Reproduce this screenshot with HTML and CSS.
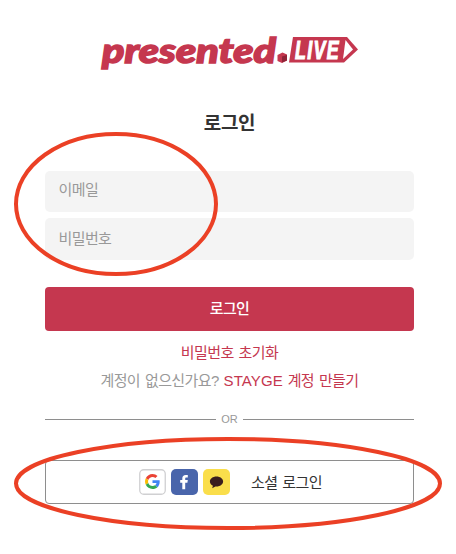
FILE: index.html
```html
<!DOCTYPE html>
<html lang="ko">
<head>
    <meta charset="UTF-8">
    <meta name="viewport" content="width=device-width, initial-scale=1.0">
    <title>presented.LIVE - 로그인</title>
    <link rel="stylesheet" href="styles.css">
</head>
<body>

    <div class="login-box">
        <svg class="logo" width="258" height="36" viewBox="0 0 258 36">
            <text class="logo-name" x="2" y="27.500" textLength="174" lengthAdjust="spacingAndGlyphs">presented</text>
            <path fill="#c5374f" d="M177.500 20l5-2.500 4.500 2v6l-5 2.500-4.500-2z"/>
            <path fill="#8f2438" d="M182 21.500l5-1.500v5.500l-5 2z"/>
            <path fill="#c5374f" d="M193 2h54l11 12.500-14 13h-55z"/>
            <path fill="#fff" d="M245.500 5l7.500 9.500-10 9.500z"/>
            <text class="logo-live" x="195" y="24" textLength="45" lengthAdjust="spacingAndGlyphs">LIVE</text>
        </svg>

        <h1>로그인</h1>

        <form>
            <input type="text" placeholder="이메일">
            <input type="password" placeholder="비밀번호">
            <button type="button" class="login-button">로그인</button>
        </form>

        <div class="links">
            <p><a>비밀번호 초기화</a></p>
            <p>계정이 없으신가요? <a><span class="latin">STAYGE</span> 계정 만들기</a></p>
        </div>

        <div class="divider">OR</div>

        <button type="button" class="social-button">
            <span class="icons">
                <svg width="27" height="26" viewBox="0 0 27 26">
                    <rect x=".75" y=".75" width="25.500" height="24.500" rx="4" fill="#fff" stroke="#d0d0d2" stroke-width="1.300"/>
                    <g transform="translate(6 5) scale(.3125)">
                        <path fill="#ea4335" d="M24 9.500c3.540 0 6.710 1.220 9.210 3.600l6.850-6.850C35.900 2.380 30.470 0 24 0 14.620 0 6.510 5.380 2.560 13.220l7.980 6.190C12.430 13.720 17.740 9.500 24 9.500z"/>
                        <path fill="#4285f4" d="M46.980 24.550c0-1.570-.15-3.090-.38-4.550H24v9.020h12.940c-.58 2.960-2.260 5.480-4.780 7.180l7.730 6c4.510-4.180 7.090-10.360 7.090-17.650z"/>
                        <path fill="#fbbc05" d="M10.530 28.590c-.48-1.450-.76-2.990-.76-4.590s.27-3.140.76-4.590l-7.980-6.190C.92 16.460 0 20.120 0 24s.92 7.540 2.560 10.780z"/>
                        <path fill="#34a853" d="M24 48c6.480 0 11.930-2.130 15.890-5.810l-7.730-6c-2.150 1.450-4.920 2.300-8.160 2.300-6.260 0-11.570-4.220-13.470-9.910l-7.980 6.190C6.510 42.620 14.620 48 24 48z"/>
                    </g>
                </svg>
                <svg width="27" height="26" viewBox="0 0 27 26">
                    <rect width="27" height="26" rx="5" fill="#4965ab"/>
                    <path fill="#fff" d="M11.300 20.300v-6.600H9.200v-2.700h2.100V9.400c0-2.300 1.200-3.500 3.500-3.500h2v2.600h-1.300c-1 0-1.300.4-1.300 1.300V11h2.600l-.4 2.700h-2.200v6.600z"/>
                </svg>
                <svg width="27" height="26" viewBox="0 0 27 26">
                    <rect width="27" height="26" rx="5" fill="#fade4b"/>
                    <path fill="#3b1e1e" d="M13.500 7.500c-3.700 0-6.600 2.200-6.600 5 0 1.800 1.200 3.300 3 4.200l-.7 2.500 3.200-1.800 1.100.1c3.700 0 6.600-2.200 6.600-5s-2.900-5-6.600-5z"/>
                </svg>
            </span>
            소셜 로그인
        </button>
    </div>

    <!-- 강조 표시 -->
    <svg class="marks" width="456" height="554" viewBox="0 0 456 554">
        <ellipse cx="116" cy="204" rx="100" ry="70"/>
        <ellipse cx="228" cy="483.500" rx="212" ry="44.500"/>
    </svg>

</body>
</html>
```
FILE: styles.css
```css
* {
    box-sizing: border-box;
}

body {
    margin: 0;
    background-color: #ffffff;
    font-family: "Liberation Sans", "Noto Sans CJK KR", sans-serif;
    font-size: 15px;
    letter-spacing: -0.6px;
    word-spacing: 1.3px;
    color: #333333;
}

.login-box {
    width: 369px;
    margin-left: 45px;
    padding-top: 35px;
    text-align: center;
}

.logo {
    display: block;
    margin: 0 auto 0 55px;
    overflow: visible;
}

.logo-name {
    font: italic 900 34px Lato, sans-serif;
    letter-spacing: 0;
    fill: #c5374f;
    stroke: #c5374f;
    stroke-width: 1.5px;
}

.logo-live {
    font: italic 700 26px "Liberation Sans", sans-serif;
    letter-spacing: 2px;
    fill: #ffffff;
    stroke: #ffffff;
    stroke-width: 1.2px;
}

h1 {
    margin: 39px 0 34px;
    font-size: 19px;
    font-weight: 700;
    line-height: 27px;
    letter-spacing: -0.3px;
}

form {
    display: flex;
    flex-direction: column;
}

input {
    height: 41px;
    margin-bottom: 6px;
    padding: 0 13.5px 4px;
    border: none;
    border-radius: 5px;
    background-color: #f4f4f4;
    font: inherit;
    letter-spacing: inherit;
}

input[type="password"] {
    height: 42px;
    margin-bottom: 27px;
    padding-bottom: 2px;
}

input::placeholder {
    color: #999999;
}

button {
    width: 100%;
    height: 44px;
    border-radius: 4px;
    font: inherit;
    letter-spacing: inherit;
    word-spacing: inherit;
    cursor: pointer;
}

.login-button {
    padding: 0 0 4px;
    border: none;
    background-color: #c5374f;
    color: #ffffff;
    font-weight: 500;
}

.links {
    margin-top: 8px;
    color: #999999;
}

.links p {
    margin: 0;
    line-height: 28px;
}

.links a {
    color: #c5374f;
}

.latin {
    letter-spacing: 0.1px;
}

.divider {
    display: flex;
    align-items: center;
    gap: 5px;
    height: 14px;
    margin: 17px 0 34px;
    font-size: 11px;
    letter-spacing: 0;
    color: #999999;
}

.divider::before,
.divider::after {
    content: "";
    flex: 1;
    height: 1px;
    background-color: #8e8e8e;
}

.social-button {
    display: flex;
    justify-content: center;
    align-items: center;
    gap: 21px;
    padding: 0 0 1px 2px;
    border: 1px solid #8e8e8e;
    background-color: #ffffff;
    color: #333333;
}

.icons {
    display: flex;
    gap: 5px;
}

.marks {
    position: absolute;
    top: 0;
    left: 0;
    fill: none;
    stroke: #eb4025;
    stroke-width: 4px;
    pointer-events: none;
}
```
